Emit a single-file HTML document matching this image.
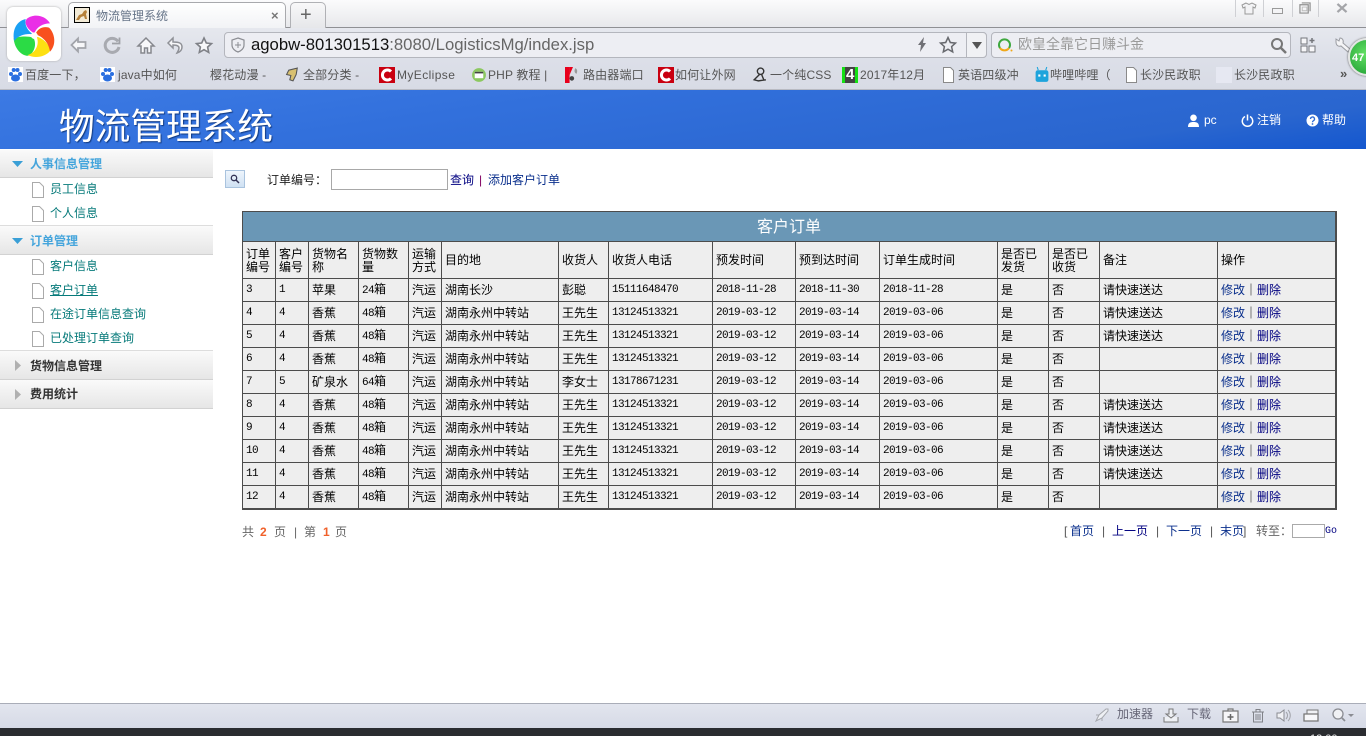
<!DOCTYPE html>
<html lang="zh">
<head>
<meta charset="utf-8">
<title>物流管理系统</title>
<style>
html,body{margin:0;padding:0;width:1366px;height:736px;overflow:hidden;background:#fff}
body{position:relative;font-family:"Liberation Sans","WenQuanYi Zen Hei","Noto Sans CJK SC",sans-serif;font-size:12px;color:#000}
.a{position:absolute}
.t{position:absolute;white-space:nowrap;line-height:16px}
#chrome{left:0;top:0;width:1366px;height:90px;background:linear-gradient(#fbfbfc 0,#e8e9ec 26px,#e6e8ee 27px,#dcdfe8 60px,#d8dbe5 89px)}
#tabline{left:0;top:27px;width:1366px;height:1px;background:#8f9094}
.bm{color:#555;font-size:12px;top:67px;letter-spacing:.15px}
svg{position:absolute;overflow:visible}
#hdr{left:0;top:90px;width:1366px;height:59px;background:linear-gradient(172deg,#3c7ae4 0,#3270dc 35%,#2c68d2 70%,#2a66cf 82%,#1457cf 100%)}
#hdr .w{color:#fff}
.g{position:absolute;left:0;width:213px;background:linear-gradient(#fafafa,#e6e6e6);border-bottom:1px solid #d2d2d2;box-sizing:border-box}
.g span{position:absolute;left:30px;font-size:12px;line-height:16px;font-weight:bold}
.it{position:absolute;left:50px;color:#067a7a;line-height:16px;white-space:nowrap}
table{position:absolute;left:242px;top:211px;width:1095px;height:298px;border-collapse:collapse;table-layout:fixed;background:#eee;border:2px solid #4c4c4c;border-left-width:1px;border-top-width:1px}
td{border:1px solid #4c4c4c;padding:1px 0 0 3px;font-weight:normal;font-size:12px;line-height:13px;text-align:left;overflow:hidden;white-space:nowrap}
.title td{background:#6a97b6;color:#fff;text-align:center;font-size:16px;height:27px;padding:2px 0 0}
.hr td{height:35px;white-space:normal}
.r td{height:21px}
.n{font-family:"Liberation Mono",monospace;font-size:11px;letter-spacing:-.6px}
td a,.lk{color:#0a2f8c;text-decoration:none}
</style>
</head>
<body>

<!-- browser chrome -->
<div id="chrome" class="a"></div>
<div id="tabline" class="a"></div>
<div class="a" style="left:68px;top:2px;width:218px;height:26px;background:linear-gradient(#fff,#f2f3f6);border:1px solid #a8a9ad;border-bottom:none;border-radius:5px 5px 0 0;box-sizing:border-box"></div>
<div class="a" style="left:290px;top:2px;width:36px;height:26px;background:linear-gradient(#f8f8f9,#e6e7ea);border:1px solid #b0b1b5;border-bottom:none;border-radius:5px 5px 0 0;box-sizing:border-box"></div>
<svg style="left:74px;top:7px" width="16" height="16" viewBox="0 0 16 16"><rect x=".5" y=".5" width="15" height="15" fill="#f2ead6" stroke="#000"/><path d="M2 13l3-5 3-1 2-3 2-1 1 2-1 2 1 5-2 0-1-3-3 1-2 3z" fill="#b5803a"/></svg>
<div class="t" style="left:96px;top:8px;color:#667488">物流管理系统</div>
<div class="t" style="left:271px;top:8px;color:#777;font-weight:bold;font-size:13px">×</div>
<div class="t" style="left:300px;top:5px;color:#666;font-size:20px;line-height:20px">+</div>

<!-- logo -->
<div class="a" style="left:7px;top:7px;width:54px;height:54px;background:#fff;border-radius:6px;box-shadow:0 0 2px #aaa"></div>
<svg style="left:5px;top:5px" width="60" height="60" viewBox="0 0 180 180">
<path d="M85 98C65 92 40 95 26 100C28 130 50 155 72 152C90 140 95 115 85 98Z" fill="#2bdb45"/>
<path d="M95 95C115 100 135 120 135 138C122 155 90 162 68 150C90 145 105 120 95 95Z" fill="#fde012"/>
<path d="M92 88C95 72 115 62 132 68C150 85 155 120 135 140C132 115 115 95 92 88Z" fill="#f8501e"/>
<path d="M88 85C70 75 55 55 65 42C85 25 120 30 135 55C115 55 95 65 88 85Z" fill="#ea2ee6"/>
<path d="M85 88C65 85 40 90 28 108C22 85 28 50 62 42C58 60 68 78 85 88Z" fill="#1aa0f4"/>
<circle cx="88" cy="92" r="10" fill="#fff"/>
</svg>

<!-- nav icons -->
<svg style="left:70px;top:37px" width="17" height="16" viewBox="0 0 17 16"><path d="M8 1.500L1.500 8 8 14.500V11h7.500V5H8z" fill="#f7f7f9" stroke="#a2a4aa" stroke-width="1.800"/></svg>
<svg style="left:103px;top:36px" width="18" height="18" viewBox="0 0 18 18"><path d="M15 5.500A7 7 0 1 0 16 11" fill="none" stroke="#a8aab0" stroke-width="3"/><path d="M9 7.500h7.500V1.500" fill="none" stroke="#a0a2a8" stroke-width="1.800"/></svg>
<svg style="left:137px;top:37px" width="18" height="17" viewBox="0 0 18 17"><path d="M9 1L1 9h3v7h3.500v-5h3v5H14V9h3z" fill="#f8f8fa" stroke="#85878d" stroke-width="1.500"/></svg>
<svg style="left:167px;top:37px" width="17" height="17" viewBox="0 0 17 17"><path d="M6 1L1 6l5 5V8c4 0 6 1 6 3 0 2-1 3-2 5 3-1 5-3 5-6 0-4-3-5-9-5z" fill="#f6f6f8" stroke="#8f9197" stroke-width="1.500"/></svg>
<svg style="left:195px;top:37px" width="18" height="17" viewBox="0 0 18 17"><path d="M9 1l2.300 5 5.200.6-3.900 3.500 1.100 5.300L9 12.700l-4.700 2.700 1.100-5.300L1.500 6.600l5.200-.6z" fill="#f8f8fa" stroke="#7f8187" stroke-width="1.600"/></svg>

<!-- address bar -->
<div class="a" style="left:224px;top:32px;width:763px;height:26px;background:#edeef3;border:1px solid #b4b6bd;border-radius:4px;box-sizing:border-box"></div>
<svg style="left:231px;top:37px" width="14" height="16" viewBox="0 0 14 16"><path d="M7 1l6 2v5c0 3.500-3 6-6 7-3-1-6-3.500-6-7V3z" fill="none" stroke="#8b8d93" stroke-width="1.200"/><path d="M7 5v6M4 8h6" stroke="#8b8d93"/></svg>
<div class="t" style="left:251px;top:36px;font-size:16.7px;line-height:18px;color:#111">agobw-801301513<span style="color:#666">:8080/LogisticsMg/index.jsp</span></div>
<svg style="left:917px;top:37px" width="10" height="15" viewBox="0 0 10 15"><path d="M7 0L1 8h3L3 15l6-9H6z" fill="#6f7075"/></svg>
<svg style="left:939px;top:36px" width="18" height="18" viewBox="0 0 18 18"><path d="M9 1.500l2.300 5 5.200.6-3.900 3.500 1.100 5.300L9 13.200l-4.700 2.700 1.100-5.300-3.900-3.500 5.200-.6z" fill="none" stroke="#67696e" stroke-width="1.500"/></svg>
<div class="a" style="left:966px;top:32px;width:21px;height:26px;background:#f0f1f4;border:1px solid #b4b6bd;border-radius:0 4px 4px 0;box-sizing:border-box"></div>
<svg style="left:972px;top:42px" width="10" height="7" viewBox="0 0 10 7"><path d="M0 0h10L5 7z" fill="#555"/></svg>

<!-- search bar -->
<div class="a" style="left:991px;top:32px;width:300px;height:26px;background:#edeef3;border:1px solid #b4b6bd;border-radius:4px;box-sizing:border-box"></div>
<svg style="left:998px;top:38px" width="16" height="15" viewBox="0 0 16 15"><path d="M2 10A5.500 5.500 0 1 1 11 10" fill="none" stroke="#3fa83f" stroke-width="2"/><path d="M2 10A5.500 5.500 0 0 0 11 10" fill="none" stroke="#f0a818" stroke-width="2"/><circle cx="13.500" cy="12.500" r="1" fill="#f0a818"/></svg>
<div class="t" style="left:1018px;top:36px;font-size:14px;line-height:17px;color:#9a9a9a">欧皇全靠它日赚斗金</div>
<svg style="left:1270px;top:37px" width="17" height="17" viewBox="0 0 17 17"><circle cx="7" cy="7" r="5" fill="none" stroke="#777" stroke-width="2"/><path d="M11 11l5 5" stroke="#777" stroke-width="2.500"/></svg>
<svg style="left:1300px;top:37px" width="16" height="16" viewBox="0 0 16 16"><path d="M1 1h6v6H1zM1 9h6v6H1zM9 9h6v6H9z" fill="#f6f6f8" stroke="#74767b"/><path d="M12 1v5M9.500 3.500h5" stroke="#74767b" stroke-width="1.500"/></svg>
<svg style="left:1334px;top:36px" width="18" height="18" viewBox="0 0 18 18"><path d="M2 3l3 2 1-3c2 0 4 2 3 5l7 6-2 3-7-6c-3 1-5-1-5-4z" fill="#f4f4f6" stroke="#9a9ca2"/></svg>

<!-- window controls -->
<div class="a" style="left:1235px;top:0;width:1px;height:17px;background:#cfd0d4"></div>
<div class="a" style="left:1263px;top:0;width:1px;height:17px;background:#cfd0d4"></div>
<div class="a" style="left:1292px;top:0;width:1px;height:17px;background:#cfd0d4"></div>
<div class="a" style="left:1318px;top:0;width:1px;height:17px;background:#cfd0d4"></div>
<svg style="left:1241px;top:2px" width="16" height="13" viewBox="0 0 16 13"><path d="M5 1L1 3l1 3 2-1v7h8V5l2 1 1-3-4-2-3 1.500z" fill="#f3f3f5" stroke="#999"/></svg>
<div class="a" style="left:1272px;top:8px;width:9px;height:4px;border:1px solid #9a9a9a;background:#f4f4f6"></div>
<svg style="left:1299px;top:2px" width="12" height="12" viewBox="0 0 13 13"><path d="M1 3h9v9H1zM3 1h9v9" fill="none" stroke="#8f8f8f" stroke-width="1.300"/><path d="M3.500 5.500h5v4h-5z" fill="none" stroke="#bbb"/></svg>
<svg style="left:1336px;top:3px" width="12" height="10" viewBox="0 0 12 11"><path d="M1 1l10 9M11 1L1 10" stroke="#a4a5a9" stroke-width="2.500"/></svg>

<!-- bookmarks -->
<svg style="left:0;top:0" width="0" height="0"><defs>
<g id="paw"><rect width="15" height="15" fill="#fff"/><circle cx="3" cy="7" r="2" fill="#2b6fe0"/><circle cx="5.700" cy="3" r="2" fill="#2b6fe0"/><circle cx="9.500" cy="3" r="2" fill="#2b6fe0"/><circle cx="12" cy="7" r="2" fill="#2b6fe0"/><ellipse cx="7.500" cy="11" rx="4.500" ry="3.500" fill="#2b6fe0"/></g>
<g id="cc"><rect width="16" height="16" fill="#c90010"/><path d="M12 4.500A5 5 0 1 0 12 11.500" fill="none" stroke="#fff" stroke-width="3"/></g>
<path id="pg" d="M.5.500h7l3 3v12H.5z" fill="#fff" stroke="#8a8a8a"/>
</defs></svg>
<svg style="left:8px;top:67px" width="15" height="15"><use href="#paw"/></svg>
<div class="t bm" style="left:25px">百度一下，</div>
<svg style="left:100px;top:67px" width="15" height="15"><use href="#paw"/></svg>
<div class="t bm" style="left:118px">java中如何</div>
<div class="t bm" style="left:210px">樱花动漫 -</div>
<svg style="left:285px;top:67px" width="16" height="16" viewBox="0 0 14 15"><path d="M3 3l8-2-1 6-3 6-3-1 1-4-4-1z" fill="#d8c070" stroke="#555"/></svg>
<div class="t bm" style="left:303px">全部分类 -</div>
<svg style="left:379px;top:67px" width="16" height="16"><use href="#cc"/></svg>
<div class="t bm" style="left:397px;letter-spacing:.4px">MyEclipse</div>
<svg style="left:471px;top:67px" width="16" height="16" viewBox="0 0 14 15"><circle cx="7" cy="7.500" r="6.500" fill="#8cc860"/><rect x="3" y="4.500" width="8" height="6" fill="#fff"/><rect x="3" y="4.500" width="8" height="1.500" fill="#444"/></svg>
<div class="t bm" style="left:488px">PHP 教程 |</div>
<svg style="left:565px;top:67px" width="16" height="16" viewBox="0 0 14 14"><rect width="4" height="14" fill="#e8001c"/><path d="M4 0l3 0-3 7z" fill="#e8001c"/><circle cx="6" cy="10" r="2" fill="#444"/><path d="M9 1c2 1 2 3 1 5-2-1-2-3-1-5z" fill="#999"/></svg>
<div class="t bm" style="left:583px">路由器端口</div>
<svg style="left:658px;top:67px" width="16" height="16"><use href="#cc"/></svg>
<div class="t bm" style="left:675px">如何让外网</div>
<svg style="left:752px;top:67px" width="15" height="16" viewBox="0 0 14 15"><circle cx="8" cy="4" r="3" fill="none" stroke="#333" stroke-width="1.300"/><path d="M7 7L2 12l4 1 7-1M9 7l2 5" fill="none" stroke="#333" stroke-width="1.300"/></svg>
<div class="t bm" style="left:770px">一个纯CSS</div>
<div class="a" style="left:842px;top:67px;width:16px;height:16px;background:#14e014"></div>
<div class="a" style="left:845px;top:67px;width:10px;height:16px;background:#444"></div>
<div class="t" style="left:846px;top:66px;font-weight:bold;font-size:15px;color:#fff;line-height:17px">4</div>
<div class="t bm" style="left:860px">2017年12月</div>
<svg style="left:943px;top:67px" width="11" height="16"><use href="#pg"/></svg>
<div class="t bm" style="left:958px">英语四级冲</div>
<svg style="left:1034px;top:67px" width="16" height="16" viewBox="0 0 13 15"><rect x=".5" y="3" width="12" height="11" rx="2" fill="#1ea4dc"/><path d="M3 3L2 0M10 3l1-3" stroke="#1ea4dc"/><rect x="3" y="7" width="2" height="2" fill="#fff"/><rect x="8" y="7" width="2" height="2" fill="#fff"/></svg>
<div class="t bm" style="left:1050px">哔哩哔哩（</div>
<svg style="left:1126px;top:67px" width="11" height="16"><use href="#pg"/></svg>
<div class="t bm" style="left:1140px">长沙民政职</div>
<div class="a" style="left:1216px;top:67px;width:16px;height:16px;background:#e6e8f2"></div>
<div class="t bm" style="left:1234px">长沙民政职</div>
<div class="t" style="left:1340px;top:66px;color:#555;font-weight:bold;font-size:13px">»</div>
<div class="a" style="left:0;top:89px;width:1366px;height:1px;background:#b8bac2"></div>

<!-- green ball -->
<div class="a" style="left:1348px;top:38px;width:38px;height:38px;border-radius:50%;background:radial-gradient(circle at 45% 40%,#63e063,#2fae3f 70%,#1d8a30);border:2px solid #e4e6e4;box-shadow:0 0 2px #555;box-sizing:border-box"></div>
<div class="t" style="left:1352px;top:50px;color:#fff;font-weight:bold;font-size:11px">47</div>

<!-- page header -->
<div id="hdr" class="a">
<div class="t w" style="left:59px;top:15px;font-size:35.7px;line-height:44px;text-shadow:1px 1px 1px #123a80">物流管理系统</div>
<svg style="left:1187px;top:24px" width="13" height="13" viewBox="0 0 13 13"><circle cx="6.500" cy="3.800" r="3.300" fill="#fff"/><path d="M1 13c0-4 2-5 5.500-5S12 9 12 13z" fill="#fff"/></svg>
<div class="t w" style="left:1204px;top:22px">pc</div>
<svg style="left:1241px;top:24px" width="13" height="13" viewBox="0 0 13 13"><path d="M4 2.500A5.200 5.200 0 1 0 9 2.500" fill="none" stroke="#fff" stroke-width="1.500"/><path d="M6.500 .5v6" stroke="#fff" stroke-width="1.500"/></svg>
<div class="t w" style="left:1257px;top:22px">注销</div>
<svg style="left:1306px;top:24px" width="13" height="13" viewBox="0 0 13 13"><circle cx="6.500" cy="6.500" r="6" fill="#fff"/><path d="M4.500 5a2 2 0 1 1 3 1.700c-.7.400-1 .8-1 1.500" fill="none" stroke="#2d6bd4" stroke-width="1.300"/><circle cx="6.500" cy="10" r=".9" fill="#2d6bd4"/></svg>
<div class="t w" style="left:1322px;top:22px">帮助</div>
</div>

<!-- sidebar -->
<div class="g" style="top:150px;height:28px"><span style="top:6px;color:#45a5dc">人事信息管理</span></div>
<div class="g" style="top:225px;height:30px;border-top:1px solid #ddd"><span style="top:7px;color:#45a5dc">订单管理</span></div>
<div class="g" style="top:350px;height:30px;border-top:1px solid #ddd"><span style="top:7px;color:#333">货物信息管理</span></div>
<div class="g" style="top:380px;height:29px"><span style="top:6px;color:#333">费用统计</span></div>
<svg style="left:12px;top:161px" width="12" height="6"><path d="M0 0h11L5.500 6z" fill="#3a9fd6"/></svg>
<svg style="left:12px;top:238px" width="12" height="6"><path d="M0 0h11L5.500 6z" fill="#3a9fd6"/></svg>
<svg style="left:15px;top:360px" width="6" height="11"><path d="M0 0l6 5.500L0 11z" fill="#b0b0b0"/></svg>
<svg style="left:15px;top:389px" width="6" height="11"><path d="M0 0l6 5.500L0 11z" fill="#b0b0b0"/></svg>
<svg style="left:32px;top:182px" width="12" height="16"><path d="M.5.500h7l4 4v11H.5z" fill="#fff" stroke="#aaa"/></svg>
<svg style="left:32px;top:206px" width="12" height="16"><path d="M.5.500h7l4 4v11H.5z" fill="#fff" stroke="#aaa"/></svg>
<svg style="left:32px;top:259px" width="12" height="16"><path d="M.5.500h7l4 4v11H.5z" fill="#fff" stroke="#aaa"/></svg>
<svg style="left:32px;top:283px" width="12" height="16"><path d="M.5.500h7l4 4v11H.5z" fill="#fff" stroke="#aaa"/></svg>
<svg style="left:32px;top:307px" width="12" height="16"><path d="M.5.500h7l4 4v11H.5z" fill="#fff" stroke="#aaa"/></svg>
<svg style="left:32px;top:331px" width="12" height="16"><path d="M.5.500h7l4 4v11H.5z" fill="#fff" stroke="#aaa"/></svg>
<div class="it" style="top:181px">员工信息</div>
<div class="it" style="top:205px">个人信息</div>
<div class="it" style="top:258px">客户信息</div>
<div class="it" style="top:282px;text-decoration:underline">客户订单</div>
<div class="it" style="top:306px">在途订单信息查询</div>
<div class="it" style="top:330px">已处理订单查询</div>

<!-- search row -->
<div class="a" style="left:225px;top:170px;width:20px;height:18px;background:linear-gradient(#eef5fc,#cfe1f3);border:1px solid #a9c3de;box-sizing:border-box"></div>
<svg style="left:230px;top:174px" width="10" height="10" viewBox="0 0 10 10"><circle cx="4" cy="4" r="2.700" fill="none" stroke="#335" stroke-width="1.300"/><path d="M6 6l3 3" stroke="#335" stroke-width="1.500"/></svg>
<div class="t" style="left:267px;top:172px;color:#222">订单编号：</div>
<div class="a" style="left:331px;top:169px;width:117px;height:21px;border:1px solid #a8a8a8;background:#fff;box-sizing:border-box"></div>
<div class="t lk" style="left:450px;top:172px;color:#000080">查询</div>
<div class="t" style="left:479px;top:172px;color:#800060">|</div>
<div class="t lk" style="left:488px;top:172px">添加客户订单</div>

<!-- table -->
<table>
<colgroup>
<col style="width:33px"><col style="width:33px"><col style="width:50px"><col style="width:50px"><col style="width:33px"><col style="width:117px"><col style="width:50px"><col style="width:104px"><col style="width:83px"><col style="width:84px"><col style="width:118px"><col style="width:51px"><col style="width:51px"><col style="width:118px"><col>
</colgroup>
<tr class="title"><td colspan="15">客户订单</td></tr>
<tr class="hr"><td>订单编号</td><td>客户编号</td><td>货物名称</td><td>货物数量</td><td>运输方式</td><td>目的地</td><td>收货人</td><td>收货人电话</td><td>预发时间</td><td>预到达时间</td><td>订单生成时间</td><td>是否已发货</td><td>是否已收货</td><td>备注</td><td>操作</td></tr>
<tr class="r"><td class="n">3</td><td class="n">1</td><td>苹果</td><td><span class="n">24</span>箱</td><td>汽运</td><td>湖南长沙</td><td>彭聪</td><td class="n">15111648470</td><td class="n">2018-11-28</td><td class="n">2018-11-30</td><td class="n">2018-11-28</td><td>是</td><td>否</td><td>请快速送达</td><td><a>修改</a>｜<a style="color:#000080">删除</a></td></tr>
<tr class="r"><td class="n">4</td><td class="n">4</td><td>香蕉</td><td><span class="n">48</span>箱</td><td>汽运</td><td>湖南永州中转站</td><td>王先生</td><td class="n">13124513321</td><td class="n">2019-03-12</td><td class="n">2019-03-14</td><td class="n">2019-03-06</td><td>是</td><td>否</td><td>请快速送达</td><td><a>修改</a>｜<a style="color:#000080">删除</a></td></tr>
<tr class="r"><td class="n">5</td><td class="n">4</td><td>香蕉</td><td><span class="n">48</span>箱</td><td>汽运</td><td>湖南永州中转站</td><td>王先生</td><td class="n">13124513321</td><td class="n">2019-03-12</td><td class="n">2019-03-14</td><td class="n">2019-03-06</td><td>是</td><td>否</td><td>请快速送达</td><td><a>修改</a>｜<a style="color:#000080">删除</a></td></tr>
<tr class="r"><td class="n">6</td><td class="n">4</td><td>香蕉</td><td><span class="n">48</span>箱</td><td>汽运</td><td>湖南永州中转站</td><td>王先生</td><td class="n">13124513321</td><td class="n">2019-03-12</td><td class="n">2019-03-14</td><td class="n">2019-03-06</td><td>是</td><td>否</td><td></td><td><a>修改</a>｜<a style="color:#000080">删除</a></td></tr>
<tr class="r"><td class="n">7</td><td class="n">5</td><td>矿泉水</td><td><span class="n">64</span>箱</td><td>汽运</td><td>湖南永州中转站</td><td>李女士</td><td class="n">13178671231</td><td class="n">2019-03-12</td><td class="n">2019-03-14</td><td class="n">2019-03-06</td><td>是</td><td>否</td><td></td><td><a>修改</a>｜<a style="color:#000080">删除</a></td></tr>
<tr class="r"><td class="n">8</td><td class="n">4</td><td>香蕉</td><td><span class="n">48</span>箱</td><td>汽运</td><td>湖南永州中转站</td><td>王先生</td><td class="n">13124513321</td><td class="n">2019-03-12</td><td class="n">2019-03-14</td><td class="n">2019-03-06</td><td>是</td><td>否</td><td>请快速送达</td><td><a>修改</a>｜<a style="color:#000080">删除</a></td></tr>
<tr class="r"><td class="n">9</td><td class="n">4</td><td>香蕉</td><td><span class="n">48</span>箱</td><td>汽运</td><td>湖南永州中转站</td><td>王先生</td><td class="n">13124513321</td><td class="n">2019-03-12</td><td class="n">2019-03-14</td><td class="n">2019-03-06</td><td>是</td><td>否</td><td>请快速送达</td><td><a>修改</a>｜<a style="color:#000080">删除</a></td></tr>
<tr class="r"><td class="n">10</td><td class="n">4</td><td>香蕉</td><td><span class="n">48</span>箱</td><td>汽运</td><td>湖南永州中转站</td><td>王先生</td><td class="n">13124513321</td><td class="n">2019-03-12</td><td class="n">2019-03-14</td><td class="n">2019-03-06</td><td>是</td><td>否</td><td>请快速送达</td><td><a>修改</a>｜<a style="color:#000080">删除</a></td></tr>
<tr class="r"><td class="n">11</td><td class="n">4</td><td>香蕉</td><td><span class="n">48</span>箱</td><td>汽运</td><td>湖南永州中转站</td><td>王先生</td><td class="n">13124513321</td><td class="n">2019-03-12</td><td class="n">2019-03-14</td><td class="n">2019-03-06</td><td>是</td><td>否</td><td>请快速送达</td><td><a>修改</a>｜<a style="color:#000080">删除</a></td></tr>
<tr class="r"><td class="n">12</td><td class="n">4</td><td>香蕉</td><td><span class="n">48</span>箱</td><td>汽运</td><td>湖南永州中转站</td><td>王先生</td><td class="n">13124513321</td><td class="n">2019-03-12</td><td class="n">2019-03-14</td><td class="n">2019-03-06</td><td>是</td><td>否</td><td></td><td><a>修改</a>｜<a style="color:#000080">删除</a></td></tr>
</table>

<!-- pager -->
<div class="t" style="left:242px;top:524px;color:#666">共</div>
<div class="t" style="left:260px;top:524px;color:#f0602a;font-weight:bold">2</div>
<div class="t" style="left:274px;top:524px;color:#666">页</div>
<div class="t" style="left:294px;top:524px;color:#666">|</div>
<div class="t" style="left:304px;top:524px;color:#666">第</div>
<div class="t" style="left:323px;top:524px;color:#f0602a;font-weight:bold">1</div>
<div class="t" style="left:335px;top:524px;color:#666">页</div>
<div class="t" style="left:1064px;top:523px;color:#555">[</div>
<div class="t lk" style="left:1070px;top:523px">首页</div>
<div class="t" style="left:1102px;top:523px;color:#555">|</div>
<div class="t lk" style="left:1112px;top:523px;color:#000080">上一页</div>
<div class="t" style="left:1156px;top:523px;color:#555">|</div>
<div class="t lk" style="left:1166px;top:523px">下一页</div>
<div class="t" style="left:1210px;top:523px;color:#555">|</div>
<div class="t lk" style="left:1220px;top:523px">末页</div>
<div class="t" style="left:1243px;top:523px;color:#555">]</div>
<div class="t" style="left:1256px;top:523px;color:#666">转至：</div>
<div class="a" style="left:1292px;top:524px;width:33px;height:14px;border:1px solid #aaa;background:#fff;box-sizing:border-box"></div>
<div class="t" style="left:1325px;top:524px;color:#000080;font-family:'Liberation Mono',monospace;font-size:10px">Go</div>

<!-- status bar -->
<div class="a" style="left:0;top:703px;width:1366px;height:25px;background:linear-gradient(#e2e5ee,#d6dae6);border-top:1px solid #a9adb8;box-sizing:border-box"></div>
<div class="a" style="left:0;top:728px;width:1366px;height:8px;background:#2a2c30"></div>
<div class="t" style="left:1310px;top:731px;color:#eee;font-size:11px">12:00</div>
<svg style="left:1094px;top:707px" width="16" height="16" viewBox="0 0 16 16"><path d="M2 14L5 8l7-6 2 0 0 2-6 7zM5 8L2 8M8 11l0 3" fill="#eef0f4" stroke="#a6a8ae"/></svg>
<div class="t" style="left:1117px;top:706px;color:#667">加速器</div>
<svg style="left:1163px;top:708px" width="16" height="15" viewBox="0 0 16 15"><path d="M6 1h4v5h3l-5 4-5-4h3zM1 9v5h14V9" fill="#eef0f4" stroke="#777"/></svg>
<div class="t" style="left:1187px;top:706px;color:#667">下载</div>
<svg style="left:1222px;top:708px" width="17" height="15" viewBox="0 0 17 15"><path d="M1 3h15v11H1zM6 3V1h5v2" fill="#f6f6f8" stroke="#777" stroke-width="1.200"/><path d="M8.500 6v6M5.500 9h6" stroke="#666" stroke-width="1.500"/></svg>
<svg style="left:1251px;top:708px" width="14" height="15" viewBox="0 0 14 15"><path d="M1 4h12M5 4V1.500h4V4M2.500 4v10h9V4M5 6v6M7 6v6M9 6v6" fill="none" stroke="#808288"/></svg>
<svg style="left:1276px;top:708px" width="16" height="15" viewBox="0 0 16 15"><path d="M1 5h3l4-3v11L4 10H1z" fill="#f0f1f4" stroke="#8a8c92"/><path d="M10 4c2 2 2 5 0 7M12 2c3 3 3 8 0 11" fill="none" stroke="#a0a2a8"/></svg>
<svg style="left:1303px;top:708px" width="17" height="15" viewBox="0 0 17 15"><path d="M4 2h11v8H4z" fill="#f0f1f4" stroke="#777"/><path d="M1 6h14v7H1z" fill="#f8f8fa" stroke="#777" stroke-width="1.300"/></svg>
<svg style="left:1332px;top:708px" width="22" height="15" viewBox="0 0 22 15"><circle cx="6" cy="6" r="5" fill="#f0f1f4" stroke="#8a8c92" stroke-width="1.300"/><path d="M10 10l3 3" stroke="#8a8c92" stroke-width="1.800"/><path d="M16 6h6l-3 3z" fill="#8a8c92"/></svg>

</body>
</html>
